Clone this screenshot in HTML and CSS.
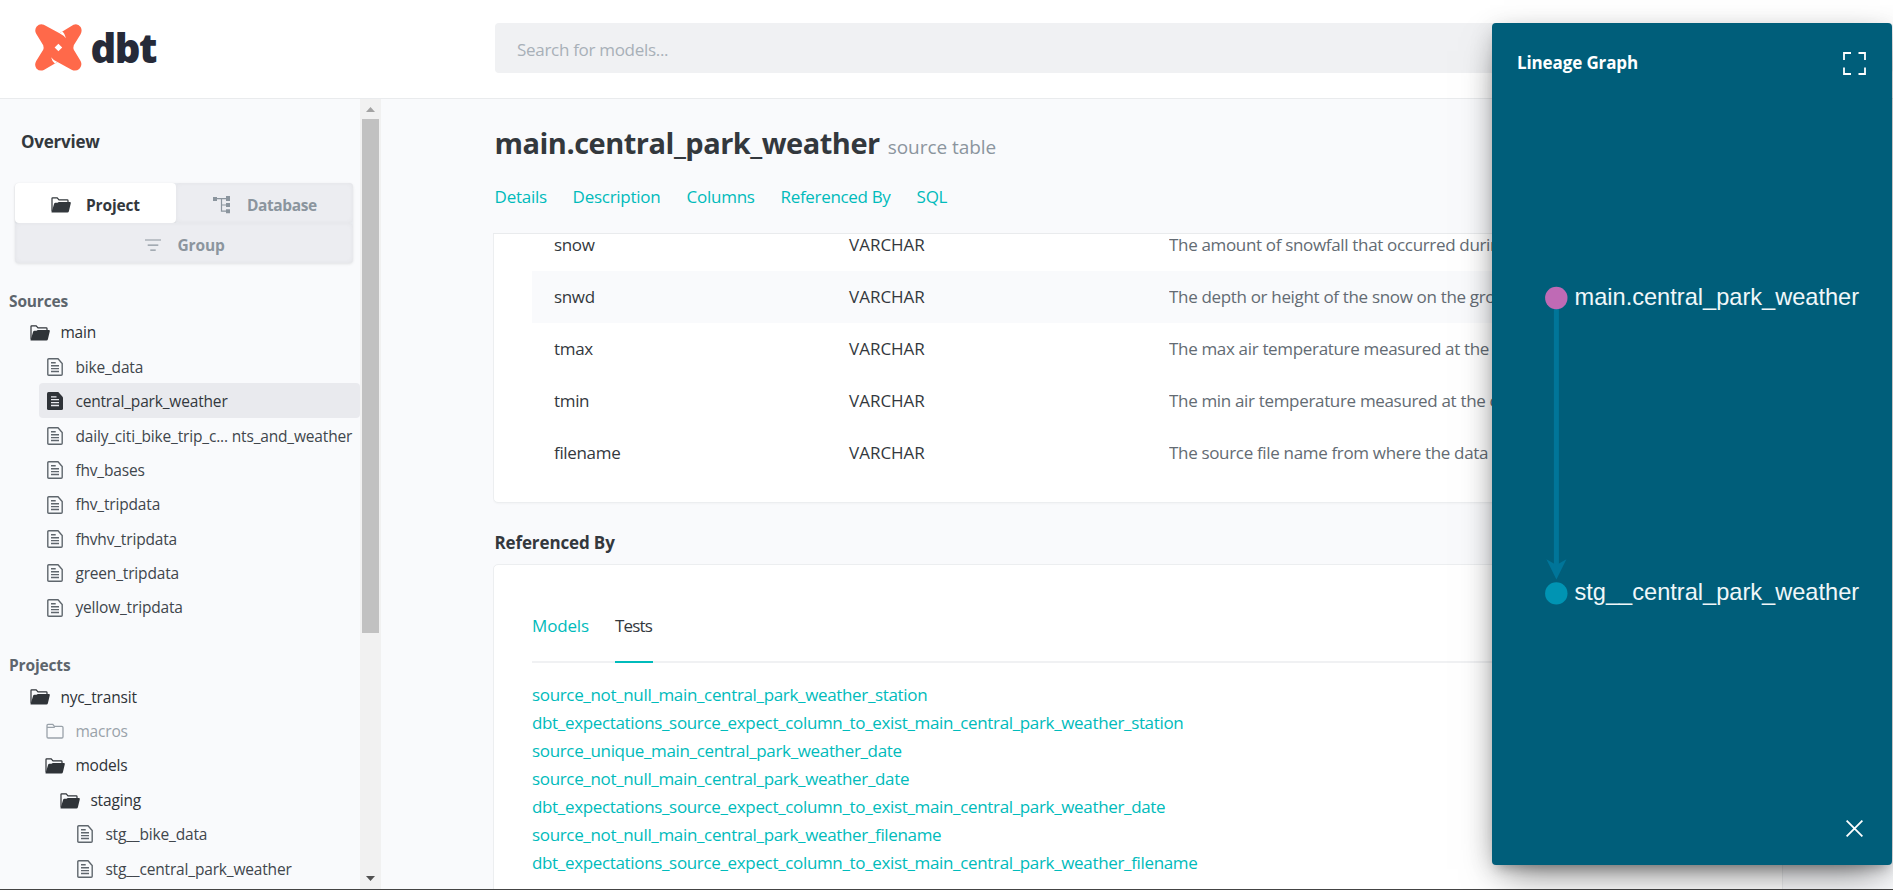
FILE: index.html
```
<!DOCTYPE html>
<html lang="en">
<head>
<meta charset="utf-8">
<title>dbt Docs</title>
<link rel="stylesheet" href="styles.css">
</head>
<body>
<svg class="defs" width="0" height="0">
  <symbol id="folder-open" viewBox="0 0 20 16">
    <path d="M1 14.5V1.4Q1 .8 1.6.8H6.2L8 2.8H16.2Q17 2.8 17 3.6V5.5" fill="none" stroke="currentColor" stroke-width="1.2"/>
    <path d="M.5 15.5 3.2 6.6Q3.5 5.8 4.4 5.8H6.5L7.8 5H19.2Q20 5.2 19.8 6.2L17.9 14.3Q17.6 15.5 16.4 15.5Z" fill="currentColor"/>
  </symbol>
  <symbol id="folder" viewBox="0 0 18 16">
    <path d="M1 3.2V13.8Q1 15 2.2 15H15.8Q17 15 17 13.8V4.6Q17 3.4 15.8 3.4H8.4L6.8 1.4H2Q1 1.4 1 2.4ZM1 4.4H8.8" fill="none" stroke="currentColor" stroke-width="1.3"/>
  </symbol>
  <symbol id="file" viewBox="0 0 16 18">
    <path d="M.8 1.8Q.8.8 1.8.8H11L15.2 5.6V16.2Q15.2 17.2 14.2 17.2H1.8Q.8 17.2.8 16.2Z" fill="none" stroke="currentColor" stroke-width="1.4"/>
    <path d="M4 4.8H8.7M4 7.7H12M4 10.6H12M4 13.5H12" stroke="currentColor" stroke-width="1.4"/>
  </symbol>
  <symbol id="file-solid" viewBox="0 0 16 18">
    <path d="M0 1.5Q0 0 1.5 0H11.3L16 5.3V16.5Q16 18 14.5 18H1.5Q0 18 0 16.5Z" fill="currentColor"/>
    <path d="M4 4.8H9.5M4 7.7H12M4 10.6H12M4 13.5H12" stroke="#e9eaee" stroke-width="1.3"/>
  </symbol>
</svg>

<div class="app">
  <header class="topbar">
    <div class="logo">
      <svg class="logo-mark" viewBox="0 0 47 47">
        <path fill="#ff694a" d="M8.800.8 24.500 9.200 38.500.8Q42.800-.9 45.600 3 47.600 6.500 45.600 10.200L38.800 21.200Q38 23.500 38.800 25.800L45.600 37Q47.800 41.300 44.200 45 40.800 47.700 36.600 45.700L22.500 38 8.800 45.900Q4.800 47.800 1.400 44.400-1 40.800 1.200 37L8.200 25.800Q9 23.500 8.200 21.200L1.200 9.800Q-.9 6 1.700 2.400 4.800-.8 8.800.8Z"/>
        <path fill="#fff" d="M23.400 19.700 27.200 23.500 23.400 27.300 19.600 23.500ZM27.200 7.500Q29.700 9.300 30.800 14.200 29 11.500 24.500 9.200ZM16.100 33.200Q17.300 37.900 19.800 39.600L22.500 38Q17.800 35.700 16.100 33.200Z"/>
      </svg>
      <span class="logo-text">dbt</span>
    </div>
    <div class="search">Search for models...</div>
  </header>

  <div class="body">
    <aside class="sidebar">
      <div class="nav">
        <h2 class="overview">Overview</h2>
        <div class="switch">
          <div class="tab tab-project tab-active"><svg class="tab-ico" width="20" height="16"><use href="#folder-open"/></svg>Project</div>
          <div class="tab tab-database"><svg class="tab-ico" width="17" height="18" viewBox="0 0 17 18"><path d="M0 1H4V5H0ZM13 0H17V5H13ZM13 7H17V11H13ZM13 13.300H17V17.300H13Z" fill="currentColor"/><path d="M4 2.700H13M8.500 2.700V15.200H13M8.500 9H13" fill="none" stroke="currentColor" stroke-width="1.200"/></svg>Database</div>
          <div class="tab tab-group"><svg class="tab-ico" width="16" height="12" viewBox="0 0 16 12"><path d="M0 1H16M2.700 6.200H13.300M5.300 11.200H10.700" stroke="currentColor" stroke-width="1.200"/></svg>Group</div>
        </div>
        <h3 class="group-title">Sources</h3>
        <ul class="tree">
          <li class="lv0 dir"><svg class="ico"><use href="#folder-open"/></svg><span>main</span></li>
          <li class="lv1"><svg class="ico f"><use href="#file"/></svg><span>bike_data</span></li>
          <li class="lv1 current"><svg class="ico f"><use href="#file-solid"/></svg><span>central_park_weather</span></li>
          <li class="lv1"><svg class="ico f"><use href="#file"/></svg><span>daily_citi_bike_trip_c... nts_and_weather</span></li>
          <li class="lv1"><svg class="ico f"><use href="#file"/></svg><span>fhv_bases</span></li>
          <li class="lv1"><svg class="ico f"><use href="#file"/></svg><span>fhv_tripdata</span></li>
          <li class="lv1"><svg class="ico f"><use href="#file"/></svg><span>fhvhv_tripdata</span></li>
          <li class="lv1"><svg class="ico f"><use href="#file"/></svg><span>green_tripdata</span></li>
          <li class="lv1"><svg class="ico f"><use href="#file"/></svg><span>yellow_tripdata</span></li>
        </ul>
        <h3 class="group-title">Projects</h3>
        <ul class="tree">
          <li class="lv0 dir"><svg class="ico"><use href="#folder-open"/></svg><span>nyc_transit</span></li>
          <li class="lv1 muted"><svg class="ico c"><use href="#folder"/></svg><span>macros</span></li>
          <li class="lv1 dir"><svg class="ico"><use href="#folder-open"/></svg><span>models</span></li>
          <li class="lv2 dir"><svg class="ico"><use href="#folder-open"/></svg><span>staging</span></li>
          <li class="lv3"><svg class="ico f"><use href="#file"/></svg><span>stg__bike_data</span></li>
          <li class="lv3"><svg class="ico f"><use href="#file"/></svg><span>stg__central_park_weather</span></li>
        </ul>
      </div>
      <div class="scrollbar">
        <svg class="arrow" width="9" height="5" viewBox="0 0 9 5"><path d="M0 5 4.500 0 9 5Z" fill="#a3a3a3"/></svg>
        <div class="thumb"></div>
        <svg class="arrow arrow-down" width="9" height="5" viewBox="0 0 9 5"><path d="M0 0H9L4.500 5Z" fill="#505050"/></svg>
      </div>
    </aside>

    <main class="content">
      <h1 class="title">main.central_park_weather <small class="kind">source table</small></h1>
      <nav class="sections"><a class="s1">Details</a><a class="s2">Description</a><a class="s3">Columns</a><a class="s4">Referenced By</a><a>SQL</a></nav>
      <div class="scroll">
        <section class="card columns-card">
          <div class="row"><span>snow</span><span class="type">VARCHAR</span><span class="desc">The amount of snowfall that occurred during the day</span></div>
          <div class="row alt"><span>snwd</span><span class="type">VARCHAR</span><span class="desc">The depth or height of the snow on the ground</span></div>
          <div class="row"><span>tmax</span><span class="type">VARCHAR</span><span class="desc">The max air temperature measured at the</span></div>
          <div class="row"><span>tmin</span><span class="type">VARCHAR</span><span class="desc">The min air temperature measured at the central</span></div>
          <div class="row"><span>filename</span><span class="type">VARCHAR</span><span class="desc">The source file name from where the data</span></div>
        </section>
        <h2 class="section-title">Referenced By</h2>
        <section class="card refs">
          <div class="ref-tabs"><a class="ref-tab">Models</a><a class="ref-tab on">Tests</a></div>
          <ul class="links">
            <li>source_not_null_main_central_park_weather_station</li>
            <li>dbt_expectations_source_expect_column_to_exist_main_central_park_weather_station</li>
            <li>source_unique_main_central_park_weather_date</li>
            <li>source_not_null_main_central_park_weather_date</li>
            <li>dbt_expectations_source_expect_column_to_exist_main_central_park_weather_date</li>
            <li>source_not_null_main_central_park_weather_filename</li>
            <li>dbt_expectations_source_expect_column_to_exist_main_central_park_weather_filename</li>
          </ul>
        </section>
      </div>
    </main>
  </div>
</div>

<div class="lineage">
  <div class="lineage-head">
    <span>Lineage Graph</span>
    <svg class="expand" width="23" height="23" viewBox="0 0 23 23"><path d="M1 8V1H8M15.500 1H22V8M22 15.500V22H15.500M8 22H1V15.500" fill="none" stroke="#fff" stroke-width="1.800"/></svg>
  </div>
  <svg class="graph" width="400" height="842" viewBox="0 0 400 842">
    <path d="M64.400 275V542" stroke="#007599" stroke-width="5"/>
    <path d="M54.400 536.300 64.400 556.500 74.400 536.300 64.400 542Z" fill="#007599"/>
    <circle cx="64.300" cy="275" r="11.200" fill="#bf6ab5"/>
    <circle cx="64.300" cy="570.400" r="11.200" fill="#0094b3"/>
    <text class="node-label" x="82.500" y="281.700">main.central_park_weather</text>
    <text class="node-label" x="82.500" y="577">stg__central_park_weather</text>
  </svg>
  <svg class="close" width="17" height="17" viewBox="0 0 17 17"><path d="M.6.6 16.400 16.400M16.400.6.6 16.400" stroke="#fff" stroke-width="1.800"/></svg>
</div>
</body>
</html>
```
FILE: styles.css
```
* { box-sizing: border-box; }
body {
  margin: 0;
  font-family: "Open Sans", "Noto Sans", sans-serif;
  color: #33383d;
  background: #f9fafc;
  overflow: hidden;
}
h1, h2, h3, ul { margin: 0; padding: 0; }
ul { list-style: none; }
.defs { position: absolute; }
.app {
  height: 890px;
  display: flex;
  flex-direction: column;
  border-bottom: 1px solid #444;
  overflow: hidden;
}

/* Header */
.topbar {
  flex: none;
  height: 99px;
  display: flex;
  align-items: flex-start;
  background: #fff;
  border-bottom: 1px solid #e9ebed;
}
.logo { width: 495px; padding: 24px 0 0 35px; display: flex; }
.logo-mark { width: 47px; height: 47px; overflow: visible; }
.logo-text {
  margin: 1px 0 0 8.500px;
  font-size: 40px;
  line-height: 46px;
  font-weight: 800;
  letter-spacing: -1.500px;
  color: #262a38;
}
.search {
  flex: 1;
  margin-top: 23px;
  height: 50px;
  padding-left: 22px;
  border-radius: 4px;
  background: #f0f1f3;
  color: #a8b0b8;
  font-size: 17px;
  line-height: 54px;
  letter-spacing: -.3px;
}

/* Sidebar */
.body { flex: 1; min-height: 0; display: flex; }
.sidebar { width: 381px; flex: none; display: flex; }
.nav { width: 360px; overflow: hidden; }
.overview {
  padding: 28px 0 0 21px;
  font-size: 17px;
  line-height: 30px;
  letter-spacing: -.22px;
}
.switch {
  margin: 26px 0 0 15px;
  width: 338px;
  display: flex;
  flex-wrap: wrap;
  background: #e9ebef;
  border-radius: 4px;
  box-shadow: 0 1px 3px rgba(0, 0, 0, .1);
}
.tab {
  height: 40px;
  display: flex;
  align-items: center;
  border-radius: 4px;
  background: #ecedf1;
  box-shadow: inset 0 0 5px rgba(0, 0, 0, .045);
  color: #8b959e;
  font-size: 15.5px;
  font-weight: 700;
  letter-spacing: -.15px;
  padding-top: 3px;
}
.tab-active { background: #fff; color: #33383d; box-shadow: 0 1px 2px rgba(0, 0, 0, .1); }
.tab-project { width: 161px; padding-left: 36px; }
.tab-project .tab-ico { margin-right: 15px; }
.tab-database { width: 177px; padding-left: 37px; letter-spacing: -.4px; }
.tab-database .tab-ico { margin-right: 17px; }
.tab-group { width: 338px; padding-left: 130px; }
.tab-group .tab-ico { margin-right: 16.500px; }
.group-title {
  height: 26.400px;
  margin-top: 25px;
  padding-left: 9px;
  font-size: 15.5px;
  line-height: 27px;
  letter-spacing: -.15px;
  color: #5d656d;
}
.tree + .group-title { margin-top: 28.400px; }
.tree li {
  height: 34.400px;
  display: flex;
  align-items: center;
  font-size: 15.5px;
  letter-spacing: -.17px;
  white-space: nowrap;
  color: #40464c;
}
.tree li span { padding-top: 1.500px; }
.ico { width: 20px; height: 16px; margin: 3px 10.400px 0 0; flex: none; }
.ico.f { width: 16px; height: 18px; margin: 2px 12.400px 0 2px; }
.ico.c { width: 18px; height: 16px; margin: 2px 11.400px 0 1px; }
.tree .f { color: #5f666d; }
.tree .dir { color: #2f3338; }
.tree .muted { color: #9aa2aa; }
.tree .lv0 { padding-left: 30px; }
.tree .lv1 { padding-left: 6px; margin-left: 39px; }
.tree .lv2 { padding-left: 60px; }
.tree .lv3 { padding-left: 75px; }
.tree .current { background: #e9eaee; border-radius: 4px; color: #33383d; }
.tree .current .f { color: #2f3338; }
.scrollbar {
  width: 21px;
  background: #f1f1f1;
  display: flex;
  flex-direction: column;
  align-items: center;
  padding: 8px 0;
}
.arrow { flex: none; }
.thumb { width: 17px; height: 514px; margin-top: 7px; background: #c1c1c1; }
.arrow-down { margin-top: auto; }

/* Main column */
.content { width: 1402px; flex: none; padding-left: 112px; display: flex; flex-direction: column; }
.title {
  margin: 24px 0 0 1.500px;
  font-size: 29px;
  line-height: 40px;
  letter-spacing: -.5px;
  white-space: nowrap;
}
.kind { margin-left: 1px; font-size: 19px; line-height: 1; font-weight: 400; color: #8b959e; letter-spacing: -.05px; }
.sections {
  display: flex;
  margin: 19px 0 21px 1.600px;
  height: 30px;
  line-height: 30px;
  font-size: 17px;
  letter-spacing: -.27px;
  color: #0bb;
}
.s1 { width: 78px; }
.s2 { width: 114px; }
.s3 { width: 94px; }
.s4 { width: 136px; letter-spacing: -.33px; }
.scroll { flex: 1; min-height: 0; overflow: hidden; border-top: 1px solid #e9ebed; }
.card {
  background: #fff;
  border: 1px solid #eceef0;
  border-radius: 5px;
  box-shadow: 0 1px 2px rgba(0, 0, 0, .03);
}
.columns-card { margin-top: -17px; padding: 1px 38px 24px; }
.row {
  height: 51.800px;
  padding-left: 22px;
  display: grid;
  grid-template-columns: 295px 320px 1fr;
  align-items: center;
  font-size: 17px;
  letter-spacing: -.33px;
  white-space: nowrap;
}
.row.alt { background: #f9fafc; }
.type { letter-spacing: 0; }
.desc { color: #636b73; overflow: hidden; }
.section-title {
  margin: 25px 0 6px 1.500px;
  font-size: 17px;
  line-height: 30px;
  letter-spacing: -.13px;
}
.refs { height: 500px; padding: 0 38px; }
.ref-tabs {
  height: 98px;
  display: flex;
  gap: 26px;
  border-bottom: 2px solid #f0f1f3;
  font-size: 17px;
}
.ref-tab { height: 98px; padding-top: 44px; line-height: 34px; color: #0bb; letter-spacing: -.15px; }
.ref-tab.on { width: 38px; color: #33383d; letter-spacing: -.8px; border-bottom: 2px solid #0bb; }
.links { padding-top: 18px; }
.links li { height: 28px; line-height: 28px; font-size: 17px; letter-spacing: -.34px; color: #0bb; }

/* Lineage overlay */
.lineage {
  position: absolute;
  left: 1492px;
  top: 23px;
  width: 400px;
  height: 842px;
  border-radius: 4px;
  background: #005e7a;
  box-shadow: 0 16px 38px -12px rgba(0, 0, 0, .56), 0 4px 25px 0 rgba(0, 0, 0, .12), 0 8px 10px -5px rgba(0, 0, 0, .2);
}
.lineage-head {
  display: flex;
  justify-content: space-between;
  padding: 29px 26px 0 25px;
  font-size: 17px;
  line-height: 22px;
  font-weight: 700;
  letter-spacing: -.12px;
  color: #fff;
}
.graph { position: absolute; left: 0; top: 0; }
.node-label { font: 23.600px "Liberation Sans", Arial, sans-serif; fill: #f0f7f9; }
.close { position: absolute; right: 29px; bottom: 28px; }
```
